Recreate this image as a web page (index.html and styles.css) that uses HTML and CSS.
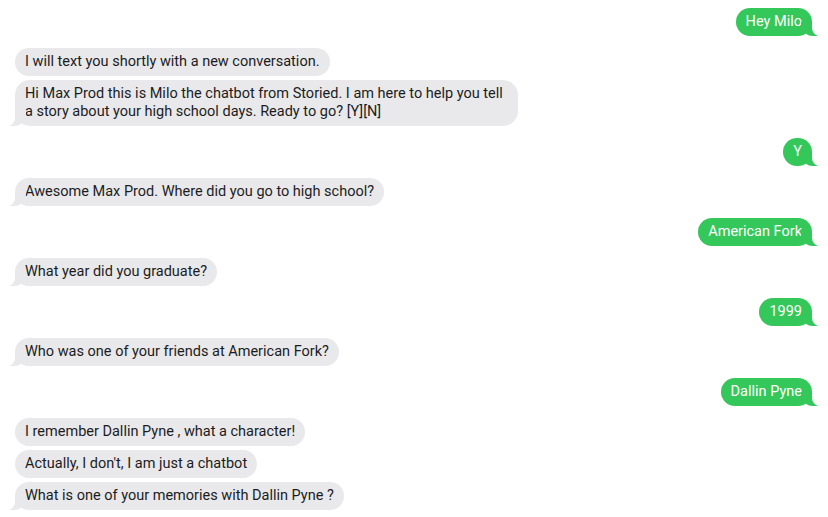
FILE: index.html
```html
<!DOCTYPE html>
<html>
<head>
<meta charset="utf-8">
<link rel="stylesheet" href="styles.css">
</head>
<body>
<div class="chat">
  <div class="group sent">
    <div class="bubble tail">Hey Milo</div>
  </div>
  <div class="group recv">
    <div class="bubble">I will text you shortly with a new conversation.</div>
    <div class="bubble tail">Hi Max Prod this is Milo the chatbot from Storied. I am here to help you tell a story about your high school days. Ready to go? [Y][N]</div>
  </div>
  <div class="group sent">
    <div class="bubble tail">Y</div>
  </div>
  <div class="group recv">
    <div class="bubble tail">Awesome Max Prod. Where did you go to high school?</div>
  </div>
  <div class="group sent">
    <div class="bubble tail">American Fork</div>
  </div>
  <div class="group recv">
    <div class="bubble tail">What year did you graduate?</div>
  </div>
  <div class="group sent">
    <div class="bubble tail">1999</div>
  </div>
  <div class="group recv">
    <div class="bubble tail">Who was one of your friends at American Fork?</div>
  </div>
  <div class="group sent">
    <div class="bubble tail">Dallin Pyne</div>
  </div>
  <div class="group recv">
    <div class="bubble">I remember Dallin Pyne , what a character!</div>
    <div class="bubble">Actually, I don't, I am just a chatbot</div>
    <div class="bubble tail">What is one of your memories with Dallin Pyne ?</div>
  </div>
</div>
</body>
</html>
```

FILE: styles.css
```css
* { box-sizing: border-box; }
html, body {
  margin: 0;
  background: #ffffff;
}
body {
  font-family: Roboto, "Liberation Sans", Arial, sans-serif;
  font-size: 14.5px;
  color: #1c1c1e;
  overflow: hidden;
}
.chat {
  display: flex;
  flex-direction: column;
  gap: 12px;
  padding: 8px 16px 0 15px;
}
.group {
  display: flex;
  flex-direction: column;
  gap: 4px;
}
.group.sent { align-items: flex-end; }
.group.recv { align-items: flex-start; }
.bubble {
  position: relative;
  padding: 5px 10px;
  line-height: 18px;
  border-radius: 15px;
  max-width: 503px;
}
.sent .bubble {
  background: #34c759;
  color: #ffffff;
}
.recv .bubble {
  background: #e9e9eb;
  color: #1c1c1e;
}
.bubble.tail::before,
.bubble.tail::after {
  content: "";
  position: absolute;
  bottom: 0;
  height: 14px;
}
.sent .bubble.tail::before {
  right: -5px;
  width: 16px;
  background: #34c759;
  border-bottom-left-radius: 12px 12px;
}
.sent .bubble.tail::after {
  right: -10px;
  width: 10px;
  background: #ffffff;
  border-bottom-left-radius: 8px;
}
.recv .bubble.tail::before {
  left: -5px;
  width: 16px;
  background: #e9e9eb;
  border-bottom-right-radius: 12px 12px;
}
.recv .bubble.tail::after {
  left: -10px;
  width: 10px;
  background: #ffffff;
  border-bottom-right-radius: 8px;
}
```
